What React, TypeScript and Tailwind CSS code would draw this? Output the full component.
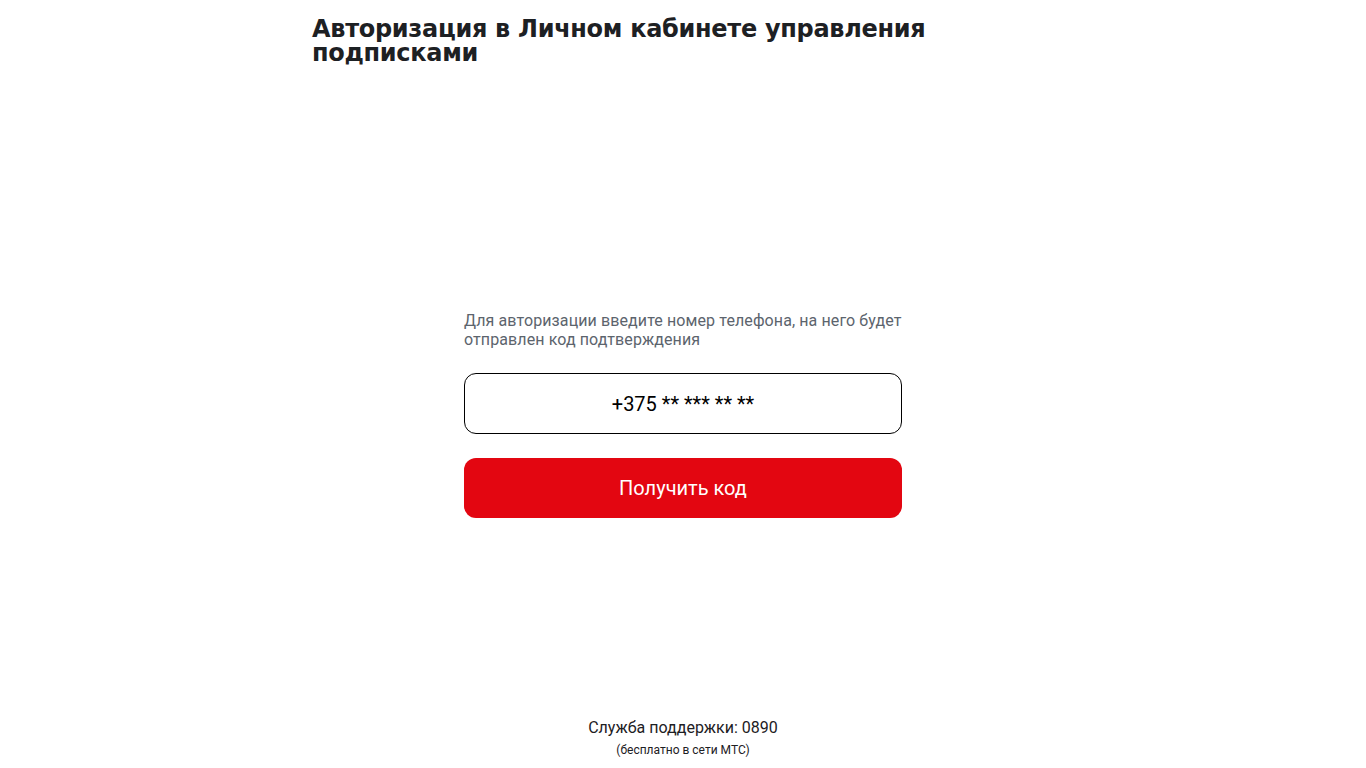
export default function App() {
  return (
    <div className="flex min-h-screen flex-col bg-white font-['Roboto',sans-serif]">
      <div className="mx-auto w-[742px] pt-[17px]">
        <h1 className="w-[660px] font-['DejaVu_Sans',sans-serif] text-[24px] font-bold leading-[24px] tracking-[-0.3px] text-[#1d2023]">
          Авторизация в Личном кабинете управления подписками
        </h1>
      </div>

      <div className="mx-auto mt-[246px] w-[438px]">
        <p className="text-[16px] leading-[19px] tracking-[0.1px] text-[#5c646d]">
          Для авторизации введите номер телефона, на него будет отправлен код подтверждения
        </p>
        <div className="mt-[24px] flex h-[61px] items-center justify-center rounded-[12px] border border-black">
          <span className="text-[20px] text-black">+375 ** *** ** **</span>
        </div>
        <button className="mt-[24px] flex h-[60px] w-full items-center justify-center rounded-[12px] bg-[#e30611] text-[20px] text-white">
          Получить код
        </button>
      </div>

      <div className="mt-auto pb-[10px] text-center text-[#1d2023]">
        <div className="text-[16px] leading-[24px]">Служба поддержки: 0890</div>
        <div className="mt-[2px] text-[12px] leading-[16px]">(бесплатно в сети МТС)</div>
      </div>
    </div>
  );
}
